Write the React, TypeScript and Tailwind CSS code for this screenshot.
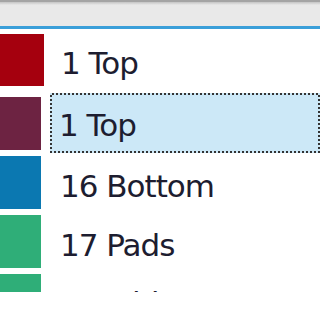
export default function App() {
  const rows = [
    { color: "bg-[#6d2342]", label: "1 Top", selected: true },
    { color: "bg-[#0b78b1]", label: "16 Bottom" },
    { color: "bg-[#2fae78]", label: "17 Pads" },
    { color: "bg-[#2fae78]", label: "18 Mid-Layer", last: true },
  ];

  return (
    <div
      className="w-[320px] h-[320px] bg-white overflow-hidden"
      style={{ fontFamily: '"DejaVu Sans", Tahoma, sans-serif' }}
    >
      {/* toolbar strip */}
      <div className="h-[26px] bg-[#e9e9e9] flex flex-col">
        <div className="h-[2px] bg-[#a4a4a4]" />
        <div className="h-[3px] bg-gradient-to-b from-[#c4c4c4] to-[#e9e9e9]" />
      </div>
      <div className="h-[3px] bg-[#3b9fd9]" />

      {/* layer list */}
      <div className="h-[263px] overflow-hidden text-[#1d1d30] text-[31px] tracking-[-1px]">
        <div className="h-[65px] flex items-start">
          <div className="w-[44px] h-[52px] mt-[5px] bg-[#a5000e]" />
          <span className="ml-[17px] mt-[19px] leading-none">1 Top</span>
        </div>
        {rows.map((r) => (
          <div key={r.label} className="h-[59px] flex items-start">
            <div className={`w-[41px] h-[53px] mt-[3px] ${r.color}`} />
            {r.selected ? (
              <div className="ml-[9px] flex-1 h-[60px] -mt-px p-[2px] bg-[repeating-conic-gradient(#333_0_25%,#cce8f7_0_50%)] bg-[length:4px_4px]">
                <div className="h-full bg-[#cce8f7] flex items-center">
                  <span className="ml-[7px] mt-[4px] leading-none">{r.label}</span>
                </div>
              </div>
            ) : (
              <span className={`ml-[19px] leading-none ${r.last ? "mt-[17px]" : "mt-[18px]"}`}>
                {r.label}
              </span>
            )}
          </div>
        ))}
      </div>
    </div>
  );
}
